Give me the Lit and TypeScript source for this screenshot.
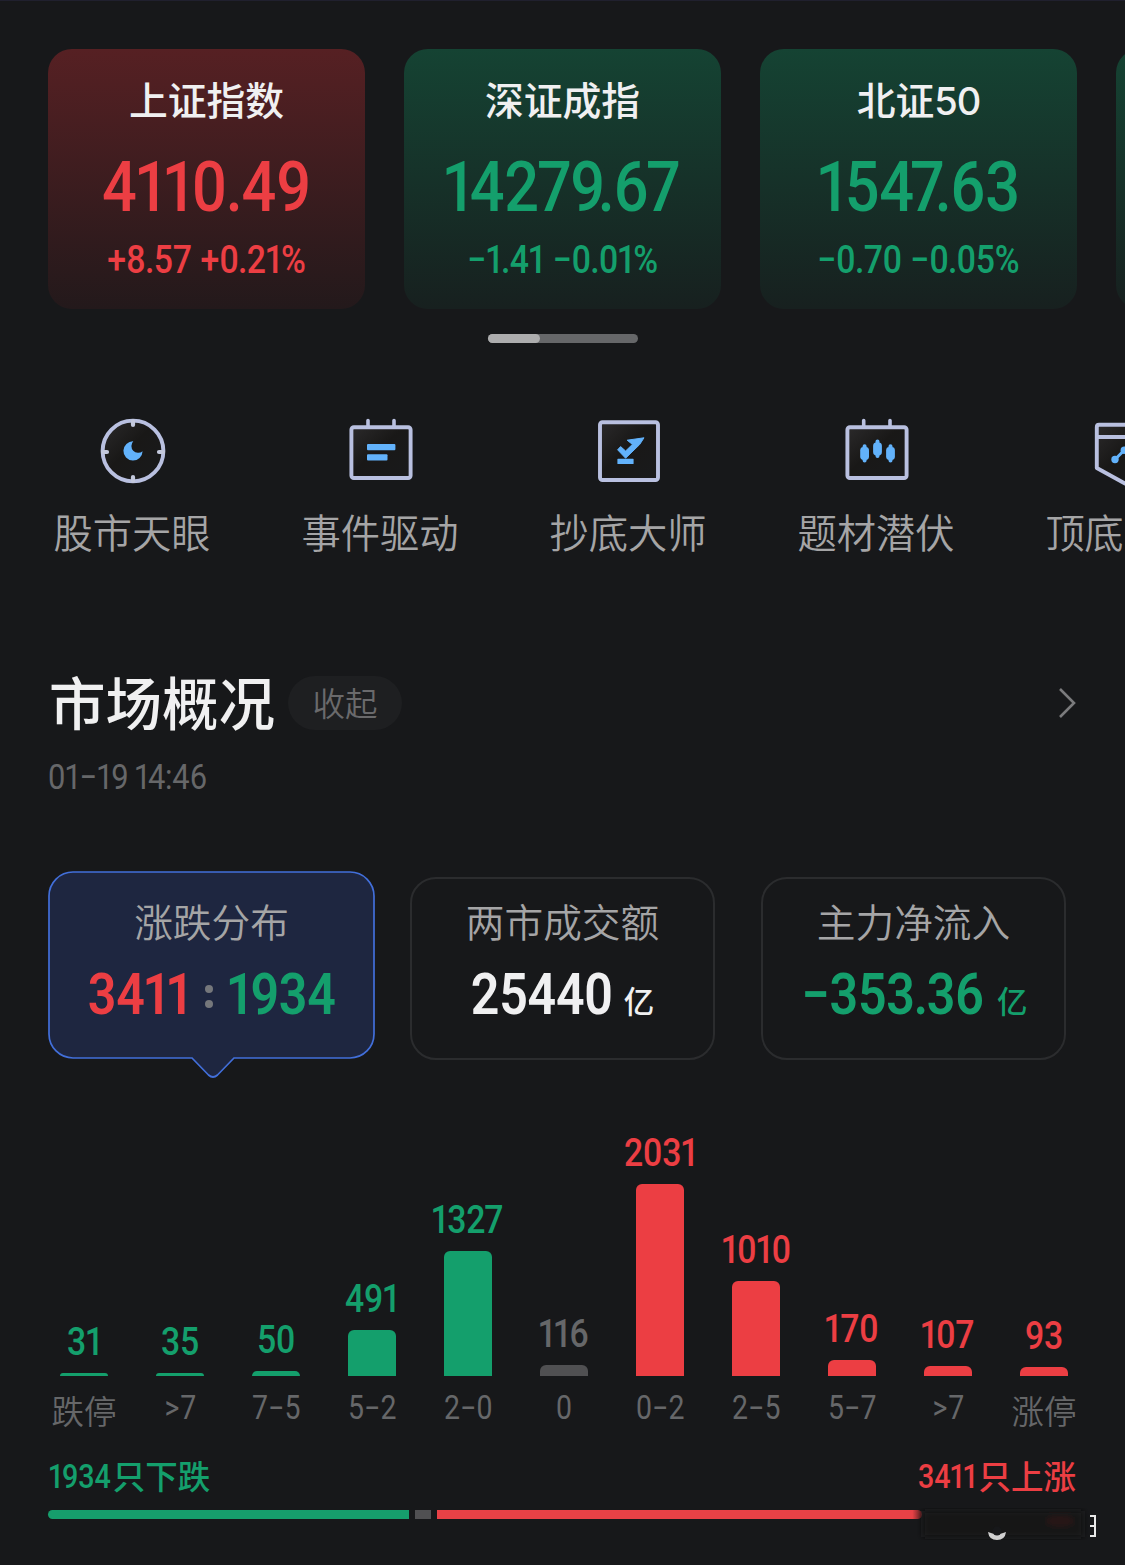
import { LitElement, html, svg, css } from "lit";
import { customElement, property } from "lit/decorators.js";

const DIGIT_CELL = 0.7;
const CELLS: Record<string, number> = {
  "1": 0.56, ".": 0.3, " ": 0.3, ":": 0.27, "-": 0.71, "+": 0.71, "%": 0.9, ">": 0.7,
};
const KERNS: Record<string, number> = {
  "14": -0.04, "27": -0.04, "79": -0.03, "9.": -0.12, "67": -0.05, "15": -0.02, "47": -0.08, "7.": -0.18, " 1": -0.05,
};
const ROBOTO_CAP = 0.711;

/** Condensed numeral run; `cap` is the digit height in pixels. */
@customElement("num-text")
export class NumText extends LitElement {
  @property() value = "";
  @property({ type: Number }) cap = 27;
  @property({ type: Number }) weight = 500;
  @property({ type: Number }) squeeze = 0.88;

  static styles = css`
    :host { display: inline-block; line-height: 0; }
    .run { display: block; overflow: visible; fill: currentColor; }
    .glyphs { font-family: Roboto, "Liberation Sans", sans-serif; text-anchor: middle; white-space: pre; }
  `;

  render() {
    let pen = 0;
    let prev = "";
    const xs: number[] = [];
    for (const ch of this.value) {
      pen += (KERNS[prev + ch] ?? 0) * this.cap;
      const w = (CELLS[ch] ?? DIGIT_CELL) * this.cap;
      const nudge = ch === "1" ? 0.02 * this.cap : 0;
      xs.push((pen + nudge + w / 2) / this.squeeze);
      pen += w;
      prev = ch;
    }
    const shown = this.value.replace(/-/g, "−");
    return html`<svg class="run" width=${pen} height=${this.cap}>
      <text class="glyphs" font-size=${this.cap / ROBOTO_CAP} font-weight=${this.weight}
        transform="scale(${this.squeeze} 1)" y=${this.cap} x=${xs.map((x) => x.toFixed(2)).join(" ")}>${shown}</text>
    </svg>`;
  }
}

type Tone = "up" | "down" | "flat";

const INDICES: { name: string; digits?: string; price: string; change: string; tone: Tone }[] = [
  { name: "上证指数", price: "4110.49", change: "+8.57 +0.21%", tone: "up" },
  { name: "深证成指", price: "14279.67", change: "-1.41 -0.01%", tone: "down" },
  { name: "北证", digits: "50", price: "1547.63", change: "-0.70 -0.05%", tone: "down" },
];

const BUCKETS: { count: number; label: string; tone: Tone }[] = [
  { count: 31, label: "跌停", tone: "down" },
  { count: 35, label: ">7", tone: "down" },
  { count: 50, label: "7-5", tone: "down" },
  { count: 491, label: "5-2", tone: "down" },
  { count: 1327, label: "2-0", tone: "down" },
  { count: 116, label: "0", tone: "flat" },
  { count: 2031, label: "0-2", tone: "up" },
  { count: 1010, label: "2-5", tone: "up" },
  { count: 170, label: "5-7", tone: "up" },
  { count: 107, label: ">7", tone: "up" },
  { count: 93, label: "涨停", tone: "up" },
];
const PEAK = 2031;
const PEAK_HEIGHT = 192;

const ICONS = {
  eye: svg`
    <circle class="frame" cx="36" cy="36" r="30.4"/>
    <path class="tick" d="M36 6v4M36 62v4M6 37h4M62 37h4"/>
    <path class="blue" d="M36.3 26.3A9.6 9.6 0 1 0 45.6 36.2A6.8 6.8 0 0 1 36.3 26.3Z"/>`,
  event: svg`
    <path class="prong" d="M23 5.5v6M49 5.5v6"/>
    <rect class="frame" x="6.4" y="12.2" width="59.2" height="50.8" rx="2.5"/>
    <rect class="blue" x="22" y="29" width="28.4" height="6.2" rx="1"/>
    <rect class="blue" x="22" y="39.3" width="20.5" height="6.2" rx="1"/>`,
  bottom: svg`
    <rect class="frame" x="7" y="7.2" width="58" height="57.8" rx="2.5"/>
    <path class="blue" d="M24.6 34.8L27.6 31.6L32.6 36L39.4 29.4L34.2 25.2L51 22.8L46.6 29.6L32.6 43.2Z" stroke="#62b2fb" stroke-linejoin="round"/>
    <rect class="blue" x="24.4" y="43.8" width="16.2" height="5.2" rx=".6"/>`,
  theme: svg`
    <path class="prong" d="M22.7 5.5v6M49 5.5v6"/>
    <rect class="frame" x="6.4" y="12.2" width="59.2" height="50.8" rx="2.5"/>
    <path class="wick" d="M23.6 31.2v14.4M36.5 26.6v14.4M49.5 31.2v14.4"/>
    <rect class="blue" x="19.2" y="32" width="8.8" height="13" rx="3.4"/>
    <rect class="blue" x="32.1" y="27.4" width="8.8" height="13" rx="3.4"/>
    <rect class="blue" x="45.1" y="32" width="8.8" height="13" rx="3.4"/>`,
  shield: svg`
    <path class="frame" d="M10 9.8H62Q64.5 9.8 64.5 12.3V53L36 68.5L7.8 53V12.3Q7.8 9.8 10 9.8ZM8 22H64"/>
    <path class="line" d="M26 44.5L35.5 35L46 43"/>
    <circle class="blue" cx="26" cy="44.5" r="3.7"/><circle class="blue" cx="35.3" cy="35.2" r="3.7"/>`,
};

const TOOLS: [string, keyof typeof ICONS][] = [
  ["股市天眼", "eye"], ["事件驱动", "event"], ["抄底大师", "bottom"], ["题材潜伏", "theme"], ["顶底", "shield"],
];

@customElement("app-root")
export class AppRoot extends LitElement {
  static styles = css`
    :host {
      display: block; width: 1125px; height: 1565px; overflow: hidden; position: relative;
      box-sizing: border-box; background: #17181a; color: #f0f0f1;
      font-family: "Noto Sans CJK SC", sans-serif; border-top: 1px solid #20202e;
    }
    .up { color: #ec3e43; }
    .down { color: #149f6c; }
    .flat { color: #666769; }
    .indices { display: flex; gap: 39px; padding: 48px 0 0 48px; }
    .index {
      flex: none; width: 317px; height: 260px; border-radius: 24px; box-sizing: border-box;
      padding-top: 24px; display: flex; flex-direction: column; align-items: center;
    }
    .index.up { background: linear-gradient(#562023, #23191b); }
    .index.down { background: linear-gradient(#154333, #17201f); }
    .index-name { font-size: 38.8px; line-height: 50px; font-weight: 500; color: #f0f0f1; }
    .latin { font-family: Inter, sans-serif; line-height: 0; font-size: 38px; letter-spacing: -1px; }
    .price { margin-top: 38px; }
    .change { margin-top: 35.5px; }
    .pager { width: 150px; height: 9px; margin: 25px 0 0 488px; border-radius: 5px; background: #666769; }
    .pager-thumb { width: 52px; height: 9px; border-radius: 5px; background: #adadae; }
    .tools { display: flex; margin: 72px 0 0 9px; }
    .tool { flex: none; width: 248px; display: flex; flex-direction: column; align-items: center; }
    .tool-name { margin: 18.5px 2px 0 0; font-size: 39.3px; line-height: 50px; font-weight: 350; color: #a5a5a6; white-space: nowrap; }
    .tool:last-child .tool-name { align-self: flex-start; margin-left: 44.5px; letter-spacing: -0.6px; }
    .icon { display: block; width: 72px; height: 72px; }
    .frame { fill: url(#glass); stroke: #b9c0e0; stroke-width: 3.9; stroke-linejoin: round; }
    .tick { fill: none; stroke: #c3c8dc; stroke-width: 4.2; stroke-linecap: round; }
    .prong { fill: none; stroke: #b9c0e0; stroke-width: 3.6; stroke-linecap: round; }
    .blue { fill: #62b2fb; }
    .line { fill: none; stroke: #62b2fb; stroke-width: 3; }
    .wick { fill: none; stroke: #62b2fb; stroke-width: 4; stroke-linecap: round; }
    .heading { display: flex; align-items: center; height: 56px; margin: 119.5px 48px 0 49px; }
    .title { font-size: 56.5px; line-height: 56px; font-weight: 500; margin-top: -6px; }
    .fold {
      margin-left: 13px; width: 114px; height: 54px; border-radius: 27px; background: #1e1f21;
      color: #6a6a6c; font-weight: 350; font-size: 32.5px; line-height: 52px; text-align: center;
    }
    .chevron { margin-left: auto; }
    .stamp { padding: 33px 0 0 48px; height: 26px; color: #666769; }
    .stamp num-text { display: block; }
    .stats { display: flex; margin: 81px 0 0 48px; height: 208px; }
    .stat { position: relative; flex: none; width: 305px; height: 183px; margin-top: 6px; box-sizing: border-box; border: 2px solid #2b2c2e; border-radius: 26px; padding-top: 15.5px; }
    .stat.active { width: 327px; height: 208px; margin: 0 35px 0 0; border: 0; padding-top: 23.5px; }
    .stat.last { margin-left: 46px; }
    .bubble { position: absolute; left: 0; top: 0; fill: #1e2640; stroke: #426fda; stroke-width: 1.7; }
    .stat-name { position: relative; font-size: 38.7px; line-height: 50px; font-weight: 350; color: #a5a5a6; text-align: center; }
    .stat-value { position: relative; display: flex; justify-content: center; align-items: flex-end; height: 40.5px; margin-top: 28.5px; }
    .unit { font-size: 30.5px; line-height: 30px; font-weight: 500; margin: 0 0 -1.5px 11px; }
    .last .unit { margin: 0 -2px -1.5px 13px; }
    .colon { width: 8px; height: 23px; margin: 0 15px 6px 15px; display: flex; flex-direction: column; justify-content: space-between; }
    .colon-dot { width: 8px; height: 8px; border-radius: 50%; background: #75777b; }
    .chart { display: flex; margin: 30px 0 0 36px; height: 318px; }
    .bucket { flex: none; width: 96px; display: flex; flex-direction: column; align-items: center; }
    .plot { height: 267px; display: flex; flex-direction: column; justify-content: flex-end; align-items: center; }
    .bar { width: 48px; margin-top: 17.5px; border-radius: 6px 6px 0 0; background: currentColor; }
    .flat .bar { background: #505052; }
    .axis { height: 50px; padding-top: 20px; box-sizing: border-box; color: #666769; }
    .axis-word { display: block; font-size: 32.5px; line-height: 40px; font-weight: 350; margin-top: -6.5px; }
    .totals { display: flex; justify-content: space-between; margin: 29.5px 49px 0; height: 44px; }
    .total { display: flex; align-items: center; gap: 2px; font-size: 32.5px; line-height: 44px; font-weight: 500; height: 38px; }
    .total num-text { margin-top: 2px; }
    .total-word { margin-top: -1px; }
    .split { display: flex; gap: 6px; height: 9px; margin: 9.5px 0 0 48px; width: 874px; }
    .seg { height: 9px; }
    .seg.down { background: #169e6c; border-radius: 5px 0 0 5px; }
    .seg.flat { background: #505052; }
    .seg.up { background: linear-gradient(90deg, #e84146 98%, #5a2022); border-radius: 0 5px 5px 0; }
    .smudge { position: absolute; left: 915px; top: 1500px; }
  `;

  private index(i: (typeof INDICES)[number]) {
    return html`<div class="index ${i.tone}">
      <div class="index-name">${i.name}${i.digits ? html`<span class="latin">${i.digits}</span>` : ""}</div>
      <num-text class="price" .value=${i.price} .cap=${49.5}></num-text>
      <num-text class="change" .value=${i.change} .cap=${27.3}></num-text>
    </div>`;
  }

  private tool([name, icon]: (typeof TOOLS)[number]) {
    return html`<div class="tool">
      <svg class="icon" viewBox="0 0 72 72">
        <defs><linearGradient id="glass" x1="0" y1="0" x2="1" y2="1">
          <stop offset="0" stop-color="#2b2a2b"/><stop offset=".45" stop-color="#191817"/><stop offset="1" stop-color="#191a1c"/>
        </linearGradient></defs>
        ${ICONS[icon]}
      </svg>
      <div class="tool-name">${name}</div>
    </div>`;
  }

  private bucket(b: (typeof BUCKETS)[number]) {
    const word = /[\u4e00-\u9fff]/.test(b.label);
    return html`<div class="bucket">
      <div class="plot ${b.tone}">
        <num-text .value=${String(b.count)} .cap=${27.3}></num-text>
        <div class="bar" style="height:${(b.count / PEAK) * PEAK_HEIGHT}px"></div>
      </div>
      <div class="axis">${word
        ? html`<span class="axis-word">${b.label}</span>`
        : html`<num-text .value=${b.label} .cap=${23} .weight=${400}></num-text>`}</div>
    </div>`;
  }

  render() {
    return html`
      <div class="indices">
        ${INDICES.map((i) => this.index(i))}
        <div class="index down"></div>
      </div>
      <div class="pager"><div class="pager-thumb"></div></div>
      <div class="tools">${TOOLS.map((t) => this.tool(t))}</div>
      <div class="heading">
        <div class="title">市场概况</div>
        <div class="fold">收起</div>
        <svg class="chevron" width="20" height="34" fill="none" stroke="#7b7b7d" stroke-width="2.6"><path d="M3 3L17 17L3 31"/></svg>
      </div>
      <div class="stamp"><num-text .value=${"01-19 14:46"} .cap=${25} .weight=${370}></num-text></div>
      <div class="stats">
        <div class="stat active">
          <svg class="bubble" width="327" height="208"><path d="M25 1H302A24 24 0 0 1 326 25V163A24 24 0 0 1 302 187H186L169.500 204Q165 208 160.500 204L144 187H25A24 24 0 0 1 1 163V25A24 24 0 0 1 25 1Z"/></svg>
          <div class="stat-name">涨跌分布</div>
          <div class="stat-value">
            <num-text class="up" .value=${"3411"} .cap=${40.5} .weight=${580}></num-text>
            <div class="colon"><div class="colon-dot"></div><div class="colon-dot"></div></div>
            <num-text class="down" .value=${"1934"} .cap=${40.5} .weight=${580}></num-text>
          </div>
        </div>
        <div class="stat">
          <div class="stat-name">两市成交额</div>
          <div class="stat-value"><num-text .value=${"25440"} .cap=${40.5} .weight=${580}></num-text><span class="unit">亿</span></div>
        </div>
        <div class="stat last">
          <div class="stat-name">主力净流入</div>
          <div class="stat-value down"><num-text .value=${"-353.36"} .cap=${40.5} .weight=${580}></num-text><span class="unit">亿</span></div>
        </div>
      </div>
      <div class="chart">${BUCKETS.map((b) => this.bucket(b))}</div>
      <div class="totals">
        <div class="total down"><num-text .value=${"1934"} .cap=${23.2}></num-text><span class="total-word">只下跌</span></div>
        <div class="total up"><num-text .value=${"3411"} .cap=${23.2}></num-text><span class="total-word">只上涨</span></div>
      </div>
      <div class="split">
        <div class="seg down" style="width:361.5px"></div>
        <div class="seg flat" style="width:16px"></div>
        <div class="seg up" style="width:485px"></div>
      </div>
      <svg class="smudge" width="190" height="50">
        <defs><filter id="soft"><feGaussianBlur stdDeviation="3"/></filter></defs>
        <g filter="url(#soft)">
          <rect x="8" y="10" width="160" height="26" fill="#131314"/>
          <ellipse cx="145" cy="20" rx="14" ry="5" fill="#2a1415"/>
        </g>
        <path d="M73 31Q82 35 91 31Q90 39 82 39Q74 39 73 31Z" fill="#d0d0d0"/>
        <circle cx="82" cy="30" r="4.500" fill="#17181a"/>
        <path d="M175 15H180V35H175M175 25H180" fill="none" stroke="#e8e8e8" stroke-width="2"/>
      </svg>
    `;
  }
}
